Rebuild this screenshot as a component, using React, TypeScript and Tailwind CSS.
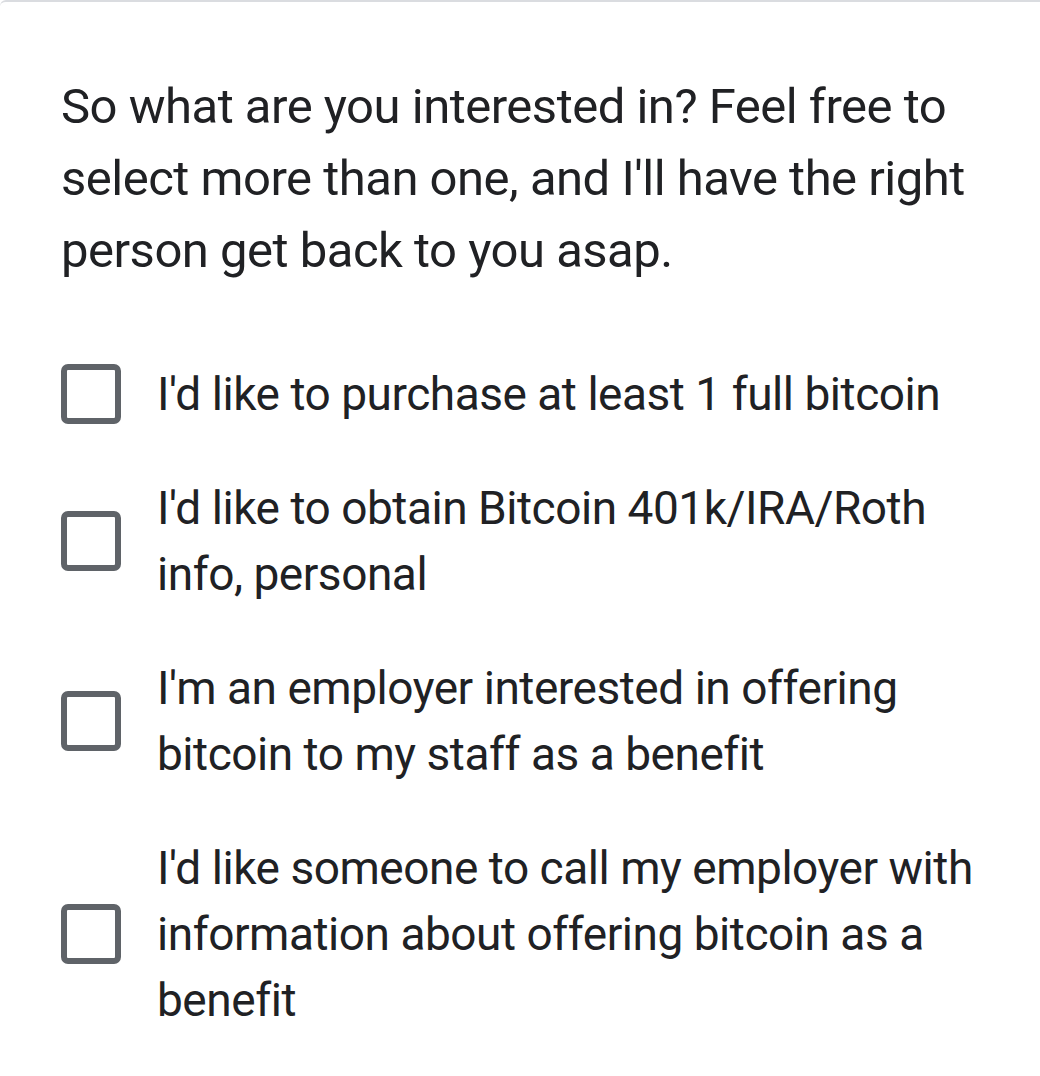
import React from "react";

const items = [
  "I'd like to purchase at least 1 full bitcoin",
  "I'd like to obtain Bitcoin 401k/IRA/Roth info, personal",
  "I'm an employer interested in offering bitcoin to my staff as a benefit",
  "I'd like someone to call my employer with information about offering bitcoin as a benefit",
];

export default function App() {
  return (
    <div
      className="w-[1040px] h-[1076px] bg-white overflow-hidden border-t-2 border-[#dadce0] rounded-tl-[6px]"
      style={{ fontFamily: "Roboto, sans-serif" }}
    >
      <div className="pl-[61px] pr-[40px] pt-[69px] text-[#202124]">
        <p className="text-[49px] leading-[72px] tracking-[-0.5px]">
          So what are you interested in? Feel free to select more than one, and I'll have the right person get back to you asap.
        </p>
        <div className="mt-[74px] flex flex-col gap-[48px]">
          {items.map((t) => (
            <label key={t} className="flex items-center gap-[36px]">
              <span className="w-[60px] h-[60px] shrink-0 rounded-[7px] border-[6px] border-[#5f6368]" />
              <span className="text-[46px] leading-[66px] tracking-[-0.47px]">{t}</span>
            </label>
          ))}
        </div>
      </div>
    </div>
  );
}
